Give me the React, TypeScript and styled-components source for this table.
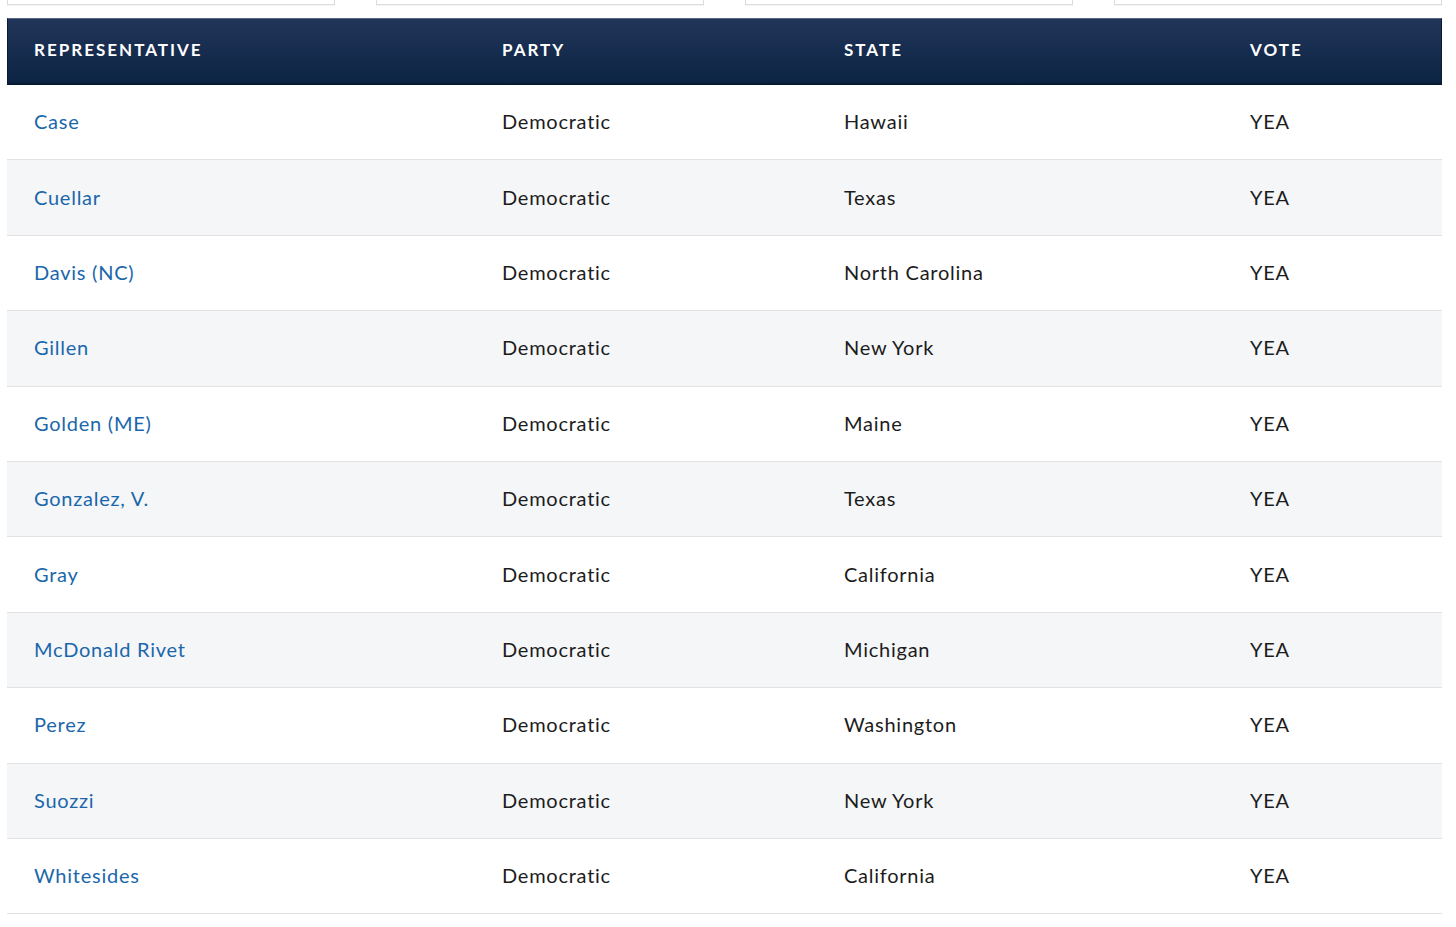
import React from "react";
import styled, { createGlobalStyle } from "styled-components";

const Global = createGlobalStyle`
  html, body { margin: 0; padding: 0; background: #ffffff; }
  body { font-family: Lato, "Noto Sans", sans-serif; overflow: hidden; }
`;

const Page = styled.div`
  padding: 0 14px 0 7px;
`;

const Filters = styled.div`
  display: grid;
  grid-template-columns: repeat(4, 1fr);
  column-gap: 41px;
  margin-top: -36px;
  margin-bottom: 13px;
`;

const FilterBox = styled.div`
  height: 40px;
  border: 1px solid #dcdcdc;
  border-top: none;
  box-shadow: 0 1px 1px rgba(0, 0, 0, 0.04);
  background: #fff;
`;

const Table = styled.div`
  display: grid;
  grid-template-columns: 468px 342px 406px 1fr;
`;

const HeadRow = styled.div`
  display: contents;
`;

const HeadCell = styled.div`
  height: 67px;
  box-sizing: border-box;
  display: flex;
  align-items: center;
  padding-left: 27px;
  padding-bottom: 3px;
  background: linear-gradient(180deg, #213559 0%, #0c2444 100%);
  border-top: 1px solid #56678a;
  border-bottom: 2px solid #071a33;
  color: #ffffff;
  font-family: Lato, "Noto Sans", sans-serif;
  font-weight: 700;
  font-size: 17px;
  letter-spacing: 2px;
  text-transform: uppercase;
  &:first-child { border-left: 1px solid #0a1a33; padding-left: 26px; }
  &:last-child { border-right: 1px solid #0a1a33; }
`;

const Row = styled.div`
  display: contents;
`;

const Cell = styled.div<{ $alt: boolean; $link?: boolean }>`
  height: 75.4px;
  box-sizing: border-box;
  display: flex;
  align-items: center;
  padding-left: 27px;
  padding-bottom: 2px;
  background: ${(p) => (p.$alt ? "#f5f6f8" : "#ffffff")};
  border-bottom: 1.5px solid #e2e2e4;
  font-size: 20px;
  letter-spacing: 0.75px;
  color: ${(p) => (p.$link ? "#1a67ab" : "#1c1c1c")};
`;

const rows: [string, string, string, string][] = [
  ["Case", "Democratic", "Hawaii", "YEA"],
  ["Cuellar", "Democratic", "Texas", "YEA"],
  ["Davis (NC)", "Democratic", "North Carolina", "YEA"],
  ["Gillen", "Democratic", "New York", "YEA"],
  ["Golden (ME)", "Democratic", "Maine", "YEA"],
  ["Gonzalez, V.", "Democratic", "Texas", "YEA"],
  ["Gray", "Democratic", "California", "YEA"],
  ["McDonald Rivet", "Democratic", "Michigan", "YEA"],
  ["Perez", "Democratic", "Washington", "YEA"],
  ["Suozzi", "Democratic", "New York", "YEA"],
  ["Whitesides", "Democratic", "California", "YEA"],
];

export default function App() {
  return (
    <Page>
      <Global />
      <Filters>
        <FilterBox />
        <FilterBox />
        <FilterBox />
        <FilterBox />
      </Filters>
      <Table>
        <HeadRow>
          <HeadCell>Representative</HeadCell>
          <HeadCell>Party</HeadCell>
          <HeadCell>State</HeadCell>
          <HeadCell>Vote</HeadCell>
        </HeadRow>
        {rows.map((r, i) => (
          <Row key={r[0]}>
            <Cell $alt={i % 2 === 1} $link>{r[0]}</Cell>
            <Cell $alt={i % 2 === 1}>{r[1]}</Cell>
            <Cell $alt={i % 2 === 1}>{r[2]}</Cell>
            <Cell $alt={i % 2 === 1}>{r[3]}</Cell>
          </Row>
        ))}
      </Table>
    </Page>
  );
}
